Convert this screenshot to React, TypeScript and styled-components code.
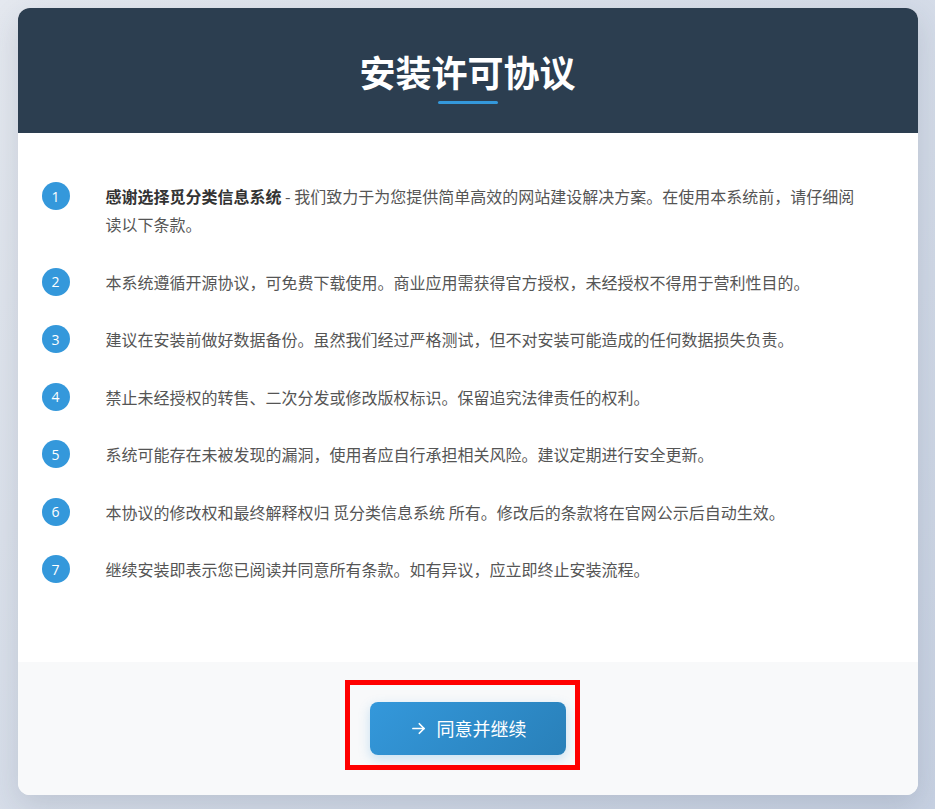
import styled, { createGlobalStyle } from 'styled-components';

const GlobalStyle = createGlobalStyle`
  html, body {
    margin: 0;
    padding: 0;
  }
  body {
    min-height: 100vh;
    background: linear-gradient(135deg, #e4e8ef 0%, #c7d1e2 100%);
    font-family: "Noto Sans CJK SC", "Open Sans", sans-serif;
    padding: 8px 0 14px;
    box-sizing: border-box;
  }
`;

const Card = styled.div`
  width: 900px;
  margin: 0 auto;
  background: #fff;
  border-radius: 12px;
  overflow: hidden;
  box-shadow: 0 10px 30px rgba(44, 62, 80, 0.15);
`;

const Header = styled.div`
  background: #2c3e50;
  height: 125px;
  display: flex;
  flex-direction: column;
  align-items: center;
  justify-content: center;
  padding-top: 10px;
  box-sizing: border-box;
`;

const Title = styled.h1`
  margin: 0;
  color: #fff;
  font-size: 36px;
  font-weight: 700;
  line-height: 48px;
`;

const Underline = styled.div`
  width: 60px;
  height: 3px;
  background: #3498db;
  margin-top: 6px;
  border-radius: 2px;
`;

const Body = styled.ol`
  list-style: none;
  margin: 0;
  padding: 49px 48px 49px 24px;
`;

const Item = styled.li`
  display: flex;
  align-items: flex-start;
  margin-bottom: 29.5px;
`;

const Num = styled.span`
  flex: 0 0 28px;
  width: 28px;
  height: 28px;
  border-radius: 50%;
  background: #3498db;
  color: #fff;
  font-family: "Open Sans", sans-serif;
  font-size: 14px;
  display: flex;
  align-items: center;
  justify-content: center;
  margin-right: 36px;
`;

const Text = styled.p`
  margin: 0;
  font-size: 16px;
  line-height: 28px;
  color: #555;
  strong {
    color: #333;
    font-weight: 700;
  }
`;

const Footer = styled.div`
  background: #f8f9fa;
  display: flex;
  justify-content: center;
  padding: 40px 0;
`;

const Highlight = styled.div`
  position: relative;
  &::after {
    content: '';
    position: absolute;
    top: -22px;
    left: -25px;
    right: -14px;
    bottom: -15px;
    border: 5px solid #ff0000;
    pointer-events: none;
  }
`;

const Button = styled.button`
  width: 196px;
  height: 53px;
  border: none;
  border-radius: 8px;
  background: linear-gradient(135deg, #3498db 0%, #2980b9 100%);
  color: #fff;
  font-family: "Noto Sans CJK SC", sans-serif;
  font-size: 18px;
  display: flex;
  align-items: center;
  justify-content: center;
  gap: 9px;
  cursor: pointer;
  box-shadow: 0 4px 12px rgba(52, 152, 219, 0.25);
`;

const items: { bold?: string; text: string }[] = [
  { bold: '感谢选择觅分类信息系统', text: ' - 我们致力于为您提供简单高效的网站建设解决方案。在使用本系统前，请仔细阅读以下条款。' },
  { text: '本系统遵循开源协议，可免费下载使用。商业应用需获得官方授权，未经授权不得用于营利性目的。' },
  { text: '建议在安装前做好数据备份。虽然我们经过严格测试，但不对安装可能造成的任何数据损失负责。' },
  { text: '禁止未经授权的转售、二次分发或修改版权标识。保留追究法律责任的权利。' },
  { text: '系统可能存在未被发现的漏洞，使用者应自行承担相关风险。建议定期进行安全更新。' },
  { text: '本协议的修改权和最终解释权归 觅分类信息系统 所有。修改后的条款将在官网公示后自动生效。' },
  { text: '继续安装即表示您已阅读并同意所有条款。如有异议，应立即终止安装流程。' },
];

export default function App() {
  return (
    <>
      <GlobalStyle />
      <Card>
        <Header>
          <Title>安装许可协议</Title>
          <Underline />
        </Header>
        <Body>
          {items.map((it, i) => (
            <Item key={i}>
              <Num>{i + 1}</Num>
              <Text>
                {it.bold && <strong>{it.bold}</strong>}
                {it.text}
              </Text>
            </Item>
          ))}
        </Body>
        <Footer>
          <Highlight>
            <Button>
              <svg width="19" height="19" viewBox="0 0 24 24" fill="none" stroke="currentColor" strokeWidth="2.2" strokeLinecap="round" strokeLinejoin="round">
                <path d="M5 12h14" />
                <path d="M13 6l6 6-6 6" />
              </svg>
              同意并继续
            </Button>
          </Highlight>
        </Footer>
      </Card>
    </>
  );
}
